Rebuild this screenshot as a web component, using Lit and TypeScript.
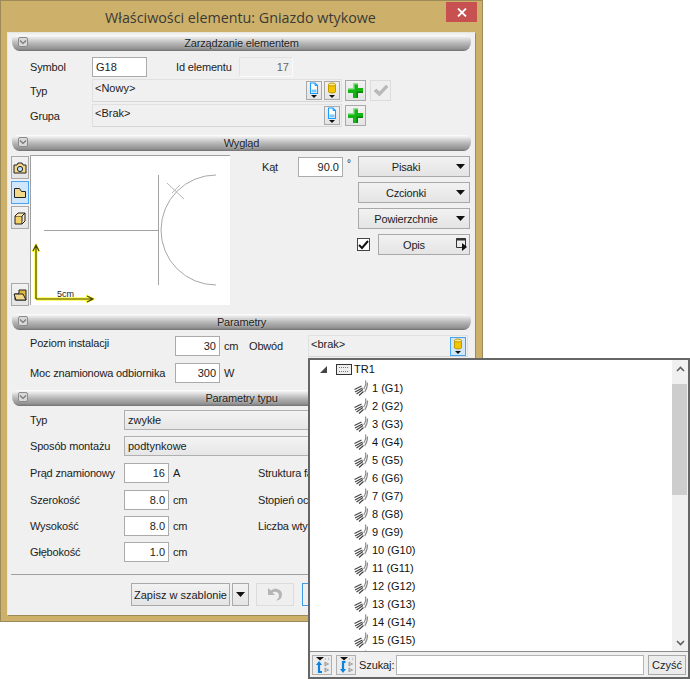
import { LitElement, html, css, svg } from "lit";
import { customElement } from "lit/decorators.js";

const chev = html`<span class="chev"><svg width="8" height="6" viewBox="0 0 8 6"><path d="M1 1.500l3 3 3-3" fill="none" stroke="#777" stroke-width="1.200"/></svg></span>`;
const tri = html`<svg class="tri" width="9" height="5" viewBox="0 0 9 5"><path d="M0 0h9L4.500 5z" fill="#111"/></svg>`;

const pageIcon = html`<svg width="12" height="17" viewBox="0 0 12 17"><path d="M2.500 1h4.500l2.500 2.500v8h-7z" fill="#fff" stroke="#1e9bff" stroke-width="1.100"/><path d="M3.500 7.500h5v3h-5z" fill="#7fc8ff"/><path d="M7 1v2.500h2.500" fill="none" stroke="#1e9bff"/><path d="M3 13h6l-3 3z" fill="#111"/></svg>`;
const dbIcon = html`<svg width="12" height="17" viewBox="0 0 12 17"><path d="M2.500 2.500h7v7.500c-1.800 1.300-5.200 1.300-7 0z" fill="#f3c400" stroke="#c29a00"/><ellipse cx="6" cy="2.500" rx="3.500" ry="1.500" fill="#ffe98a" stroke="#c29a00"/><path d="M3 13h6l-3 3z" fill="#111"/></svg>`;
const plus = html`<svg width="17" height="17" viewBox="0 0 17 17"><path d="M6 1h5v5h5v5h-5v5H6v-5H1V6h5z" fill="#12b512"/><path d="M6 1h5v1.500H7.500v5H1V6h5z" fill="#8fe08f"/><path d="M11 16V11h5v-1.500h-6.500V16z" fill="#0a800a"/></svg>`;
const checkIcon = html`<svg width="16" height="14" viewBox="0 0 16 14"><path d="M1 7l2.500-2 3 3L13 1l2 2-8.500 9z" fill="#b9b9b9" stroke="#a8a8a8" stroke-width=".5"/></svg>`;
const feather = svg`<path d="M12.500 0.500c.8 3-.2 6-1.800 8.500M14.500 2.500c0 4-1 7-2.800 9.500" fill="none" stroke="#8c8c8c" stroke-width="1.200"/><path d="M1.500 9.500l7-3.500M2 12l7.500-4M3.500 14l6.500-4.500M6 15.500l4.500-4" fill="none" stroke="#444" stroke-width="1.200"/>`;
const treeRows = Array.from({ length: 15 }, (_, i) => `${i + 1} (G${i + 1})`);

@customElement("app-root")
export class AppRoot extends LitElement {
  static styles = css`
    :host { display: block; position: relative; width: 690px; height: 679px; background: #fff; overflow: hidden;
      font-family: "Liberation Sans", Arial, sans-serif; font-size: 11px; letter-spacing: -0.17px; color: #1c1c1c; }
    * { box-sizing: border-box; }
    .window { position: absolute; left: 0; top: 0; width: 483px; height: 622px; background: #cdb06a; border: 1px solid #9c8a58; padding: 0 6px 7px; display: flex; flex-direction: column; }
    .titlebar { height: 31px; flex: none; position: relative; text-align: center; line-height: 33px; font-family: "Open Sans", "Noto Sans", sans-serif; font-size: 14.300px; letter-spacing: 0; color: #3a3a36; padding-right: 2px; }
    .close { position: absolute; right: -1px; top: 1px; width: 31px; height: 20px; background: #c75050; display: flex; align-items: center; justify-content: center; }
    .panel { flex: 1; background: #f0f0f0; border: 1px solid #e9e6dc; border-right-color: #9c8a58; border-bottom-color: #9c8a58; padding-top: 2px; }
    .head { position: relative; height: 16px; margin: 0 4px; border-radius: 7px 7px 7px 7px / 4px 4px 9px 9px; background: linear-gradient(#fff 0%, #e4e4e4 18%, #b8b8b8 50%, #909090 88%, #6f6f6f 100%); text-align: center; line-height: 16px; color: #222; text-shadow: 0 0 2px #ddd; }
    .chev { position: absolute; left: 6px; top: 2px; width: 10px; height: 10px; border: 1px solid #8c8c8c; border-radius: 2px; background: #d8d8d8; display: flex; align-items: center; justify-content: center; }
    .row { display: flex; align-items: center; }
    .lab { flex: none; white-space: nowrap; }
    .input { flex: none; height: 20px; border: 1px solid #ababab; background: #fff; line-height: 18px; padding: 0 3px; white-space: nowrap; letter-spacing: 0; }
    .num { text-align: right; }
    .ro { background: #f0f0f0; border: 1px solid #e2e2e2; border-right-color: #fafafa; border-bottom-color: #fafafa; color: #666; }
    .combo { flex: none; position: relative; height: 23px; background: #f0f0f0; border: 1px solid #e0e0e0; border-bottom-color: #d6d6d6; padding: 1px 1px 1px 3px; display: flex; justify-content: flex-end; align-items: center; gap: 2px; }
    .combo .txt { position: absolute; left: 2px; top: 1px; line-height: 14px; letter-spacing: 0; }
    .btn { flex: none; display: flex; align-items: center; justify-content: center; border: 1px solid #a9a9a9; background: linear-gradient(#f2f2f2, #e4e4e4); position: relative; white-space: nowrap; }
    .mini { width: 16px; height: 19px; }
    .sq { width: 21px; height: 21px; }
    .off { border-color: #dcdcdc; background: #efefef; }
    .blue { border-color: #4aa3f0; background: #cfe6fb; }

    .sec1 { height: 84px; padding: 6px 0 0 22px; }
    .s1a { height: 20px; }
    .s1b { height: 23px; margin-top: 2px; }
    .w62 { width: 62px; }

    .sec2 { height: 163px; display: flex; padding-left: 3px; }
    .tools { width: 19px; padding-top: 5px; display: flex; flex-direction: column; gap: 2px; flex: none; }
    .tool { width: 18px; height: 23px; }
    .spring { height: 50px; }
    .canvas { flex: none; margin-top: 4px; width: 200px; height: 150px; background: #fff; border-top: 1px solid #a0a0a0; border-left: 1px solid #a0a0a0; position: relative; }
    .canvas svg { display: block; }
    .scale { position: absolute; left: 26px; top: 133px; font-size: 9px; letter-spacing: 0; color: #222; }
    .right { flex: none; margin-left: 32px; padding-top: 5px; width: 208px; display: grid; grid-template-columns: 96px 112px; grid-auto-rows: 21px; row-gap: 5px; }
    .angle { display: flex; align-items: center; }
    .angle .lab { width: 36px; }
    .angle .input { width: 45px; }
    .deg { margin-left: 4px; margin-top: -6px; font-size: 10px; }
    .drop { justify-content: center; padding-right: 16px; }
    .drop .tri { position: absolute; right: 4px; top: 7px; }
    .opt { grid-column: 1 / 3; display: flex; justify-content: flex-end; align-items: center; }
    .cb { flex: none; width: 13px; height: 13px; border: 1px solid #444; background: #fff; margin-right: 8px; display: flex; align-items: center; justify-content: center; }
    .opis { width: 92px; height: 21px; padding-right: 20px; }
    .opis svg { position: absolute; right: 1px; top: 2px; }

    .sec3 { height: 60px; padding: 5px 0 0 22px; position: relative; }
    .p1 { height: 22px; }
    .p2 { height: 20px; margin-top: 6px; }
    .w145 { width: 145px; }
    .w45 { width: 45px; }
    .unit { margin-left: 4px; width: 20px; flex: none; }
    .ob { width: 59px; margin-left: 5px; }
    .combo-ob { width: 160px; height: 22px; }

    .sec4 { height: 168px; padding: 4px 0 0 22px; position: relative; }
    .w94 { width: 94px; }
    .sel { flex: none; width: 340px; height: 20px; border: 1px solid #b0b0b0; background: linear-gradient(#f3f3f3, #e6e6e6); line-height: 19px; padding-left: 3px; letter-spacing: 0; }
    .v { height: 20px; }
    .m6 { margin-top: 6px; }
    .m7 { margin-top: 7px; }
    .lift { margin-top: -6px; }
    .struct { margin-left: 65px; }

    .sep { height: 1px; background: #a0a0a0; margin-left: 3px; }
    .bottom { padding: 8px 0 0 123px; display: flex; gap: 2px; height: 40px; }
    .bottom .btn { height: 23px; letter-spacing: 0; }
    .save { width: 99px; }
    .arrow { width: 17px; }
    .undo { width: 38px; margin-left: 5px; }
    .next { width: 60px; margin-left: 6px; border-color: #3d9be9; background: #f0f0f0; }

    .popup { position: absolute; left: 308px; top: 358px; width: 382px; height: 321px; background: #fff; border: 2px solid #666; display: flex; flex-direction: column; }
    .body { flex: 1; min-height: 0; display: flex; overflow: hidden; }
    .tree { flex: 1; min-width: 0; overflow: hidden; padding: 1px 0 0 8px; color: #111; letter-spacing: 0; }
    .node { height: 18px; display: flex; align-items: center; }
    .tr1 { height: 16px; margin-bottom: 2px; }
    .exp { width: 7px; height: 7px; margin: 0 0 0 2px; flex: none; }
    .node .box { margin-left: 9px; margin-right: 2px; flex: none; }
    .item { padding-left: 35px; gap: 3px; }
    .item svg { flex: none; }
    .sb { width: 16px; flex: none; background: #f0f0f0; display: flex; flex-direction: column; position: relative; }
    .sb .a { height: 17px; display: flex; align-items: center; justify-content: center; flex: none; }
    .thumb { width: 15px; height: 111px; background: #cdcdcd; flex: none; margin-top: 7px; }
    .grow { flex: 1; }
    .foot { flex: none; height: 26px; border-top: 1px solid #8c8c8c; background: #f0f0f0; display: flex; align-items: center; padding: 0 2px 0 2px; }
    .ft { width: 20px; height: 20px; border: 1px solid #b0b0b0; background: #ececec; flex: none; display: flex; align-items: center; justify-content: center; margin-right: 4px; }
    .sz { margin-left: -1px; margin-right: 2px; flex: none; white-space: nowrap; letter-spacing: -0.1px; }
    .search { flex: 1; height: 20px; border: 1px solid #b5b5b5; background: #fff; }
    .clear { width: 38px; height: 20px; margin-left: 4px; background: #ececec; letter-spacing: 0; }
  `;

  private head(t: string) {
    return html`<div class="head">${chev}${t}</div>`;
  }

  private treeItem(t: string) {
    return html`<div class="node item"><svg width="16" height="17" viewBox="0 0 16 17">${feather}</svg>${t ? html`<span>${t}</span>` : ""}</div>`;
  }

  private footBtn(down: boolean) {
    return html`<div class="ft"><svg width="18" height="18" viewBox="0 0 18 18">
      <path d="M3 1h8L7 4.500z" fill="#111"/>
      <path d="M12 3h1M15 3h1M12 8h1M15 8h1M12 14h1M15 14h1M12 6l3 2-3 2zM12 12l3 2-3 2z" fill="none" stroke="#999"/>
      ${down
        ? svg`<path d="M8.500 6H6v9" fill="none" stroke="#0a84e0" stroke-width="2.200"/><path d="M3 13h6l-3 4z" fill="#0a84e0"/>`
        : svg`<path d="M6 7v9h3" fill="none" stroke="#0a84e0" stroke-width="2.200"/><path d="M3 9h6L6 5z" fill="#0a84e0"/>`}
    </svg></div>`;
  }

  render() {
    return html`
      <div class="window">
        <div class="titlebar">Właściwości elementu: Gniazdo wtykowe
          <div class="close"><svg width="10" height="9" viewBox="0 0 10 9"><path d="M1 .5l8 8M9 .5l-8 8" stroke="#fff" stroke-width="1.800"/></svg></div>
        </div>
        <div class="panel">
          ${this.head("Zarządzanie elementem")}
          <div class="sec1">
            <div class="row s1a">
              <span class="lab w62">Symbol</span>
              <div class="input" style="width:55px">G18</div>
              <span class="lab" style="margin-left:29px;width:63px">Id elementu</span>
              <div class="input ro num" style="width:54px">17</div>
            </div>
            <div class="row s1b">
              <span class="lab w62">Typ</span>
              <div class="combo" style="width:250px"><span class="txt">&lt;Nowy&gt;</span>
                <div class="btn mini">${pageIcon}</div><div class="btn mini">${dbIcon}</div></div>
              <div class="btn sq" style="margin-left:3px">${plus}</div>
              <div class="btn sq off" style="margin-left:4px">${checkIcon}</div>
            </div>
            <div class="row s1b">
              <span class="lab w62">Grupa</span>
              <div class="combo" style="width:250px"><span class="txt">&lt;Brak&gt;</span>
                <div class="btn mini">${pageIcon}</div></div>
              <div class="btn sq" style="margin-left:3px">${plus}</div>
            </div>
          </div>

          ${this.head("Wygląd")}
          <div class="sec2">
            <div class="tools">
              <div class="btn tool"><svg width="14" height="14" viewBox="0 0 14 14"><path d="M1 4h3l1-2h4l1 2h3v8H1z" fill="#f3d98a" stroke="#222"/><circle cx="7" cy="8" r="2.600" fill="#bfe3ff" stroke="#222"/></svg></div>
              <div class="btn tool blue"><svg width="14" height="14" viewBox="0 0 14 14"><path d="M1.500 2.500h5l2 3h4v6h-11z" fill="#f5d98a" stroke="#222"/></svg></div>
              <div class="btn tool"><svg width="14" height="14" viewBox="0 0 14 14"><path d="M2 5h7v8H2z" fill="#f3d06a" stroke="#222"/><path d="M2 5l3-3h7L9 5M9 13l3-3V2" fill="#fbe7a8" stroke="#222"/></svg></div>
              <div class="spring"></div>
              <div class="btn tool"><svg width="15" height="14" viewBox="0 0 15 14"><path d="M2 12V6h3l1-1V2h7v10z" fill="#e2b93f" stroke="#222"/><path d="M1 6h9l3 6H3z" fill="#f3d98a" stroke="#222"/></svg></div>
            </div>
            <div class="canvas">
              <svg width="199" height="149" viewBox="0 0 199 149">
                <path d="M13 74.500h114.500M127.500 19v110" fill="none" stroke="#a2a2a2"/>
                <path d="M185 19a55 55 0 0 0 0 110" fill="none" stroke="#a8a8a8"/>
                <path d="M136 27l17 16M141 37l8-8" fill="none" stroke="#b5b5b5"/>
                <path d="M5 143V89M5 143h57" fill="none" stroke="#ffff40" stroke-width="3.500"/>
                <path d="M5 89l-3 6h6zM62 143l-6-3v6z" fill="#ffff40" stroke="#ffff40" stroke-width="2"/>
                <path d="M5 143V89M5 143h57M2 95l3-6 3 6M56 140l6 3-6 3" fill="none" stroke="#4a4600" stroke-width="1.200"/>
              </svg>
              <span class="scale">5cm</span>
            </div>
            <div class="right">
              <div class="angle"><span class="lab">Kąt</span><div class="input num">90.0</div><span class="deg">°</span></div>
              <div class="btn drop">Pisaki${tri}</div>
              <div></div><div class="btn drop">Czcionki${tri}</div>
              <div></div><div class="btn drop">Powierzchnie${tri}</div>
              <div class="opt">
                <div class="cb"><svg width="11" height="10" viewBox="0 0 11 10"><path d="M1 5l3 3 6-7" fill="none" stroke="#111" stroke-width="2"/></svg></div>
                <div class="btn opis">Opis<svg width="13" height="14" viewBox="0 0 13 14"><path d="M1.500 1.500h9v9h-9z" fill="none" stroke="#333"/><path d="M1.500 2.500h9" stroke="#333" stroke-width="2"/><path d="M7 6l5 4-5 4z" fill="#111"/></svg></div>
              </div>
            </div>
          </div>

          ${this.head("Parametry")}
          <div class="sec3">
            <div class="row p1">
              <span class="lab w145 lift">Poziom instalacji</span>
              <div class="input num w45">30</div><span class="unit">cm</span>
              <span class="lab ob">Obwód</span>
              <div class="combo combo-ob"><span class="txt">&lt;brak&gt;</span><div class="btn mini blue">${dbIcon}</div></div>
            </div>
            <div class="row p2">
              <span class="lab w145">Moc znamionowa odbiornika</span>
              <div class="input num w45">300</div><span class="unit">W</span>
            </div>
          </div>

          ${this.head("Parametry typu")}
          <div class="sec4">
            <div class="row v"><span class="lab w94">Typ</span><div class="sel">zwykłe</div></div>
            <div class="row v m6"><span class="lab w94">Sposób montażu</span><div class="sel">podtynkowe</div></div>
            <div class="row v m7"><span class="lab w94">Prąd znamionowy</span><div class="input num w45">16</div><span class="unit">A</span><span class="lab struct">Struktura faz</span></div>
            <div class="row v m7"><span class="lab w94">Szerokość</span><div class="input num w45">8.0</div><span class="unit">cm</span><span class="lab struct">Stopień ochrony</span></div>
            <div class="row v m6"><span class="lab w94">Wysokość</span><div class="input num w45">8.0</div><span class="unit">cm</span><span class="lab struct">Liczba wtyków</span></div>
            <div class="row v m6"><span class="lab w94">Głębokość</span><div class="input num w45">1.0</div><span class="unit">cm</span></div>
          </div>

          <div class="sep"></div>
          <div class="bottom">
            <div class="btn save">Zapisz w szablonie</div>
            <div class="btn arrow">${tri}</div>
            <div class="btn off undo"><svg width="18" height="15" viewBox="0 0 18 15"><path d="M2 1v7h7L6.500 5.500C9 4 13 5 13 8.500c0 2-1 3.500-3 5 4 0 6-3 6-6C16 2.500 9 0 5 3.500z" fill="#b5b5b5"/></svg></div>
            <div class="btn next"></div>
          </div>
        </div>
      </div>

      <div class="popup">
        <div class="body">
          <div class="tree">
            <div class="node tr1">
              <svg class="exp" viewBox="0 0 7 7"><path d="M7 0v7H0z" fill="#444"/></svg>
              <svg class="box" width="16" height="11" viewBox="0 0 16 11"><rect x=".5" y=".5" width="15" height="10" fill="#eee" stroke="#333"/><path d="M3 3.500h10M3 7.500h10" stroke="#777" stroke-dasharray="1 1"/></svg>
              <span>TR1</span>
            </div>
            ${treeRows.map((t) => this.treeItem(t))}
            ${this.treeItem("")}
          </div>
          <div class="sb">
            <div class="a"><svg width="9" height="6" viewBox="0 0 9 6"><path d="M1 5l3.500-3.500L8 5" fill="none" stroke="#606060" stroke-width="1.600"/></svg></div>
            <div class="thumb"></div>
            <div class="grow"></div>
            <div class="a"><svg width="9" height="6" viewBox="0 0 9 6"><path d="M1 1l3.500 3.500L8 1" fill="none" stroke="#606060" stroke-width="1.600"/></svg></div>
          </div>
        </div>
        <div class="foot">
          ${this.footBtn(false)}${this.footBtn(true)}
          <span class="sz">Szukaj:</span>
          <div class="search"></div>
          <div class="btn clear">Czyść</div>
        </div>
      </div>
    `;
  }
}
